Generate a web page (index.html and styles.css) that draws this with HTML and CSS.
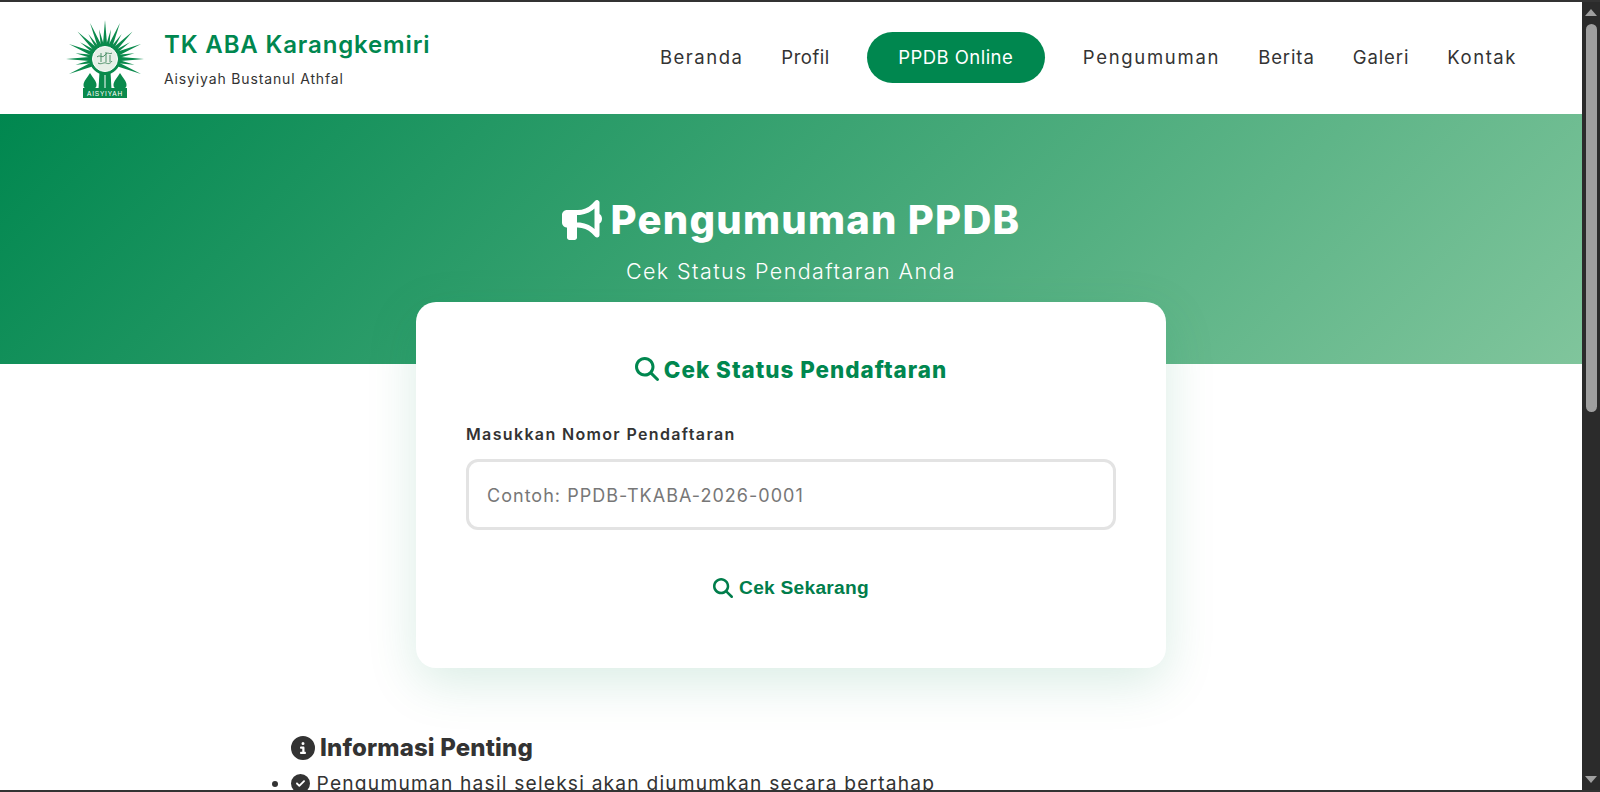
FILE: index.html
```html
<!DOCTYPE html>
<html lang="id">
<head>
<meta charset="utf-8">
<title>Pengumuman PPDB - TK ABA Karangkemiri</title>
<link rel="stylesheet" href="styles.css">
</head>
<body>
<div class="window">
  <div class="page">
    <header class="site-header">
      <a class="brand" href="#">
        <svg class="logo" viewBox="0 0 80 78" aria-hidden="true">
          <defs>
            <path id="ray" d="M40 0l2.200 26h-4.400z"/>
            <path id="ray-short" d="M40 9l1.700 17h-3.400z"/>
          </defs>
          <g class="rays">
            <use href="#ray"/>
            <use href="#ray" transform="rotate(22.5 40 39)"/>
            <use href="#ray" transform="rotate(45 40 39)"/>
            <use href="#ray" transform="rotate(67.5 40 39)"/>
            <use href="#ray" transform="rotate(90 40 39)"/>
            <use href="#ray" transform="rotate(112.5 40 39)"/>
            <use href="#ray" transform="rotate(-22.5 40 39)"/>
            <use href="#ray" transform="rotate(-45 40 39)"/>
            <use href="#ray" transform="rotate(-67.5 40 39)"/>
            <use href="#ray" transform="rotate(-90 40 39)"/>
            <use href="#ray" transform="rotate(-112.5 40 39)"/>
            <use href="#ray-short" transform="rotate(11.25 40 39)"/>
            <use href="#ray-short" transform="rotate(33.75 40 39)"/>
            <use href="#ray-short" transform="rotate(56.25 40 39)"/>
            <use href="#ray-short" transform="rotate(78.75 40 39)"/>
            <use href="#ray-short" transform="rotate(101.25 40 39)"/>
            <use href="#ray-short" transform="rotate(-11.25 40 39)"/>
            <use href="#ray-short" transform="rotate(-33.75 40 39)"/>
            <use href="#ray-short" transform="rotate(-56.25 40 39)"/>
            <use href="#ray-short" transform="rotate(-78.75 40 39)"/>
            <use href="#ray-short" transform="rotate(-101.25 40 39)"/>
            <circle cx="40" cy="39" r="15.5"/>
            <path d="M25 53c3 5 6.500 8 6.500 12 0 3-2 4-6.500 4s-6.500-1-6.500-4c0-4 3.500-7 6.500-12z"/>
            <path d="M55 53c-3 5-6.500 8-6.500 12 0 3 2 4 6.500 4s6.500-1 6.500-4c0-4-3.500-7-6.500-12z"/>
            <path d="M34.500 52h11l1 17h-13z"/>
            <rect x="18" y="68" width="44" height="10"/>
          </g>
          <circle class="disc" cx="40" cy="39" r="12.5"/>
          <path class="script" d="M32 37c3-3 5 2 8-2s4 0 7-2M33 43c3 2 6-1 8 0s4 1 6-2M36 33v9M41 32v10M45 35v7"/>
          <path class="slit" d="M40 55v13"/>
          <text class="logo-text" x="40" y="76.200" text-anchor="middle">AISYIYAH</text>
        </svg>
        <span class="brand-text">
          <span class="brand-name">TK ABA Karangkemiri</span>
          <span class="brand-sub">Aisyiyah Bustanul Athfal</span>
        </span>
      </a>
      <nav class="main-nav">
        <a class="nav-link link-beranda" href="#">Beranda</a>
        <a class="nav-link link-profil" href="#">Profil</a>
        <a class="nav-pill" href="#">PPDB Online</a>
        <a class="nav-link link-pengumuman" href="#">Pengumuman</a>
        <a class="nav-link link-berita" href="#">Berita</a>
        <a class="nav-link link-galeri" href="#">Galeri</a>
        <a class="nav-link link-kontak" href="#">Kontak</a>
      </nav>
    </header>

    <section class="hero">
      <h1 class="hero-title">
        <svg class="hero-icon" viewBox="0 0 512 512" aria-hidden="true"><path d="M480 32c0-12.900-7.800-24.600-19.800-29.600s-25.700-2.200-34.900 6.900L381.700 53c-48 48-113.100 75-181 75H192 160 64c-35.300 0-64 28.700-64 64v96c0 35.300 28.700 64 64 64V480c0 17.700 14.300 32 32 32h64c17.700 0 32-14.300 32-32V352h8.700c67.900 0 133 27 181 75l43.600 43.600c9.200 9.200 22.900 11.900 34.900 6.900s19.800-16.600 19.800-29.600V300.400c18.600-8.800 32-32.500 32-60.400s-13.400-51.600-32-60.400V32zm-64 76.700V240 371.300C357.200 317.800 280.500 288 200.700 288H192V192h8.700c79.800 0 156.500-29.800 215.300-83.300z"/></svg>
        <span>Pengumuman PPDB</span>
      </h1>
      <p class="hero-sub">Cek Status Pendaftaran Anda</p>
    </section>

    <main class="content">
      <section class="card">
        <h2 class="card-title">
          <svg class="search-icon" viewBox="0 0 512 512" aria-hidden="true"><path d="M416 208c0 45.900-14.900 88.300-40 122.700L502.600 457.400c12.500 12.500 12.500 32.800 0 45.300s-32.800 12.500-45.300 0L330.700 376c-34.400 25.200-76.800 40-122.700 40C93.100 416 0 322.900 0 208S93.100 0 208 0S416 93.100 416 208zM208 352a144 144 0 1 0 0-288 144 144 0 1 0 0 288z"/></svg>
          <span>Cek Status Pendaftaran</span>
        </h2>
        <label class="field-label" for="nomor">Masukkan Nomor Pendaftaran</label>
        <input class="field-input" id="nomor" type="text" placeholder="Contoh: PPDB-TKABA-2026-0001">
        <button class="check-button" type="button">
          <svg class="search-icon small" viewBox="0 0 512 512" aria-hidden="true"><path d="M416 208c0 45.900-14.900 88.300-40 122.700L502.600 457.400c12.500 12.500 12.500 32.800 0 45.300s-32.800 12.500-45.300 0L330.700 376c-34.400 25.200-76.800 40-122.700 40C93.100 416 0 322.900 0 208S93.100 0 208 0S416 93.100 416 208zM208 352a144 144 0 1 0 0-288 144 144 0 1 0 0 288z"/></svg>
          <span>Cek Sekarang</span>
        </button>
      </section>

      <section class="info">
        <h3 class="info-title">
          <svg class="info-icon" viewBox="0 0 512 512" aria-hidden="true"><path d="M256 512A256 256 0 1 0 256 0a256 256 0 1 0 0 512zM216 336h24V272H216c-13.300 0-24-10.700-24-24s10.700-24 24-24h48c13.300 0 24 10.700 24 24v88h8c13.300 0 24 10.700 24 24s-10.700 24-24 24H216c-13.300 0-24-10.700-24-24s10.700-24 24-24zm40-208a32 32 0 1 1 0 64 32 32 0 1 1 0-64z"/></svg>
          <span>Informasi Penting</span>
        </h3>
        <ul class="info-list">
          <li>
            <svg class="check-icon" viewBox="0 0 512 512" aria-hidden="true"><path d="M256 512A256 256 0 1 0 256 0a256 256 0 1 0 0 512zM369 209L241 337c-9.400 9.400-24.600 9.400-33.900 0l-64-64c-9.400-9.400-9.400-24.600 0-33.900s24.600-9.400 33.900 0l47 47L335 175c9.400-9.400 24.600-9.400 33.900 0s9.400 24.600 0 33.900z"/></svg>
            Pengumuman hasil seleksi akan diumumkan secara bertahap
          </li>
        </ul>
      </section>
    </main>
  </div>
  <div class="scrollbar" aria-hidden="true">
    <span class="arrow-up"></span>
    <span class="thumb"></span>
    <span class="arrow-down"></span>
  </div>
</div>
</body>
</html>
```

FILE: styles.css
```css
* { box-sizing: border-box; }
html, body { margin: 0; height: 100%; overflow: hidden; }
body {
  background: #333;
  padding: 2px 0;
  font-family: Inter, "Noto Sans", sans-serif;
  color: #333;
}
a { text-decoration: none; color: inherit; }
.window { display: flex; height: 100%; }
.page { flex: 1; min-width: 0; overflow: hidden; background: #fff; }

.site-header {
  height: 112px;
  padding: 0 65px 2px;
  display: flex;
  align-items: center;
  justify-content: space-between;
  background: #fff;
}
.brand { display: flex; align-items: center; gap: 19px; }
.logo { width: 80px; height: 78px; display: block; margin-top: 4px; }
.rays use, .rays path, .rays circle, .rays rect { fill: #0a8a4c; }
.disc { fill: #e6efe7; stroke: #fff; stroke-width: 1; }
.script { fill: none; stroke: #4d8f68; stroke-width: 1; }
.slit { stroke: #fff; stroke-width: 1; fill: none; }
.logo-text { fill: #fff; font-size: 6.5px; font-family: "Liberation Sans", sans-serif; letter-spacing: .8px; }
.brand-text { display: flex; flex-direction: column; gap: 10px; margin-top: 4px; }
.brand-name { font-size: 24px; font-weight: 600; line-height: 30px; color: #00874f; letter-spacing: .85px; }
.brand-sub { font-size: 14px; line-height: 18px; color: #333; letter-spacing: .85px; }

.main-nav { display: flex; align-items: center; gap: 38px; font-size: 18.5px; }
.nav-link { color: #333; font-weight: 400; }
.link-beranda { letter-spacing: 1.5px; }
.link-profil { letter-spacing: .5px; margin-right: -1px; }
.link-pengumuman { letter-spacing: 1.7px; }
.link-berita { letter-spacing: .9px; }
.link-galeri { letter-spacing: .9px; }
.link-kontak { letter-spacing: 1.55px; }
.nav-pill {
  display: block;
  width: 178px;
  height: 51px;
  line-height: 51px;
  text-align: center;
  border-radius: 26px;
  background: #00874f;
  color: #fff;
  letter-spacing: .45px;
}

.hero {
  height: 250px;
  padding-top: 82px;
  background: linear-gradient(135deg, #00874f 0%, #80c59c 100%);
  color: #fff;
  text-align: center;
}
.hero-title {
  margin: 0;
  display: flex;
  justify-content: center;
  align-items: center;
  gap: 9px;
  font-size: 40px;
  line-height: 48px;
  font-weight: 800;
  letter-spacing: 1.25px;
}
.hero-icon { width: 40px; height: 40px; fill: #fff; }
.hero-sub { margin: 12px 0 0; font-size: 21.5px; line-height: 30px; font-weight: 300; letter-spacing: 1.4px; }

.content { display: flex; flex-direction: column; align-items: center; }
.card {
  width: 750px;
  height: 366px;
  margin-top: -62px;
  padding: 49px 50px 0;
  position: relative;
  background: #fff;
  border-radius: 20px;
  box-shadow: 0 15px 50px rgba(0, 135, 79, .15);
}
.card-title {
  margin: 0 0 35px;
  display: flex;
  justify-content: center;
  align-items: center;
  gap: 5px;
  height: 36px;
  font-size: 22.4px;
  font-weight: 800;
  letter-spacing: 1px;
  color: #00874f;
}
.search-icon { width: 24px; height: 24px; fill: #00874f; flex: none; }
.search-icon.small { width: 20px; height: 20px; }
.field-label { display: block; font-size: 16px; line-height: 24px; font-weight: 600; letter-spacing: 1.35px; color: #333; margin-bottom: 13px; }
.field-input {
  display: block;
  width: 100%;
  height: 71px;
  padding: 2px 18px 0;
  border: 3px solid #e3e3e3;
  border-radius: 12px;
  font: 400 18px Inter, sans-serif;
  letter-spacing: 1.02px;
  color: #333;
  outline: none;
}
.field-input::placeholder { color: #777; opacity: 1; }
.check-button {
  display: flex;
  margin: 47px auto 0;
  align-items: center;
  gap: 6px;
  border: 0;
  padding: 0;
  background: none;
  font: 700 19.2px "Liberation Sans", Arial, sans-serif;
  letter-spacing: .25px;
  color: #007d4b;
}
.check-button .search-icon { fill: #007d4b; }

.info { width: 1000px; margin-top: 65px; }
.info-title {
  margin: 0;
  display: flex;
  align-items: center;
  gap: 5px;
  font-size: 24px;
  line-height: 30px;
  font-weight: 800;
  letter-spacing: .15px;
  color: #333;
}
.info-icon { width: 24px; height: 24px; fill: #333; }
.info-list { margin: 6px 0 0; padding-left: 0; font-size: 19.2px; line-height: 29px; letter-spacing: 1.2px; }
.check-icon { width: 19px; height: 19px; fill: #333; vertical-align: -3px; }

.scrollbar {
  width: 18px;
  flex: none;
  display: flex;
  flex-direction: column;
  align-items: center;
  background: #2b2b2b;
}
.arrow-up { margin-top: 7px; border: 6px solid transparent; border-top: 0; border-bottom: 7px solid #a0a0a0; }
.thumb { margin-top: 8px; width: 11px; height: 388px; border-radius: 6px; background: #9f9f9f; }
.arrow-down { margin-top: auto; margin-bottom: 7px; border: 6px solid transparent; border-bottom: 0; border-top: 7px solid #a0a0a0; }
```
